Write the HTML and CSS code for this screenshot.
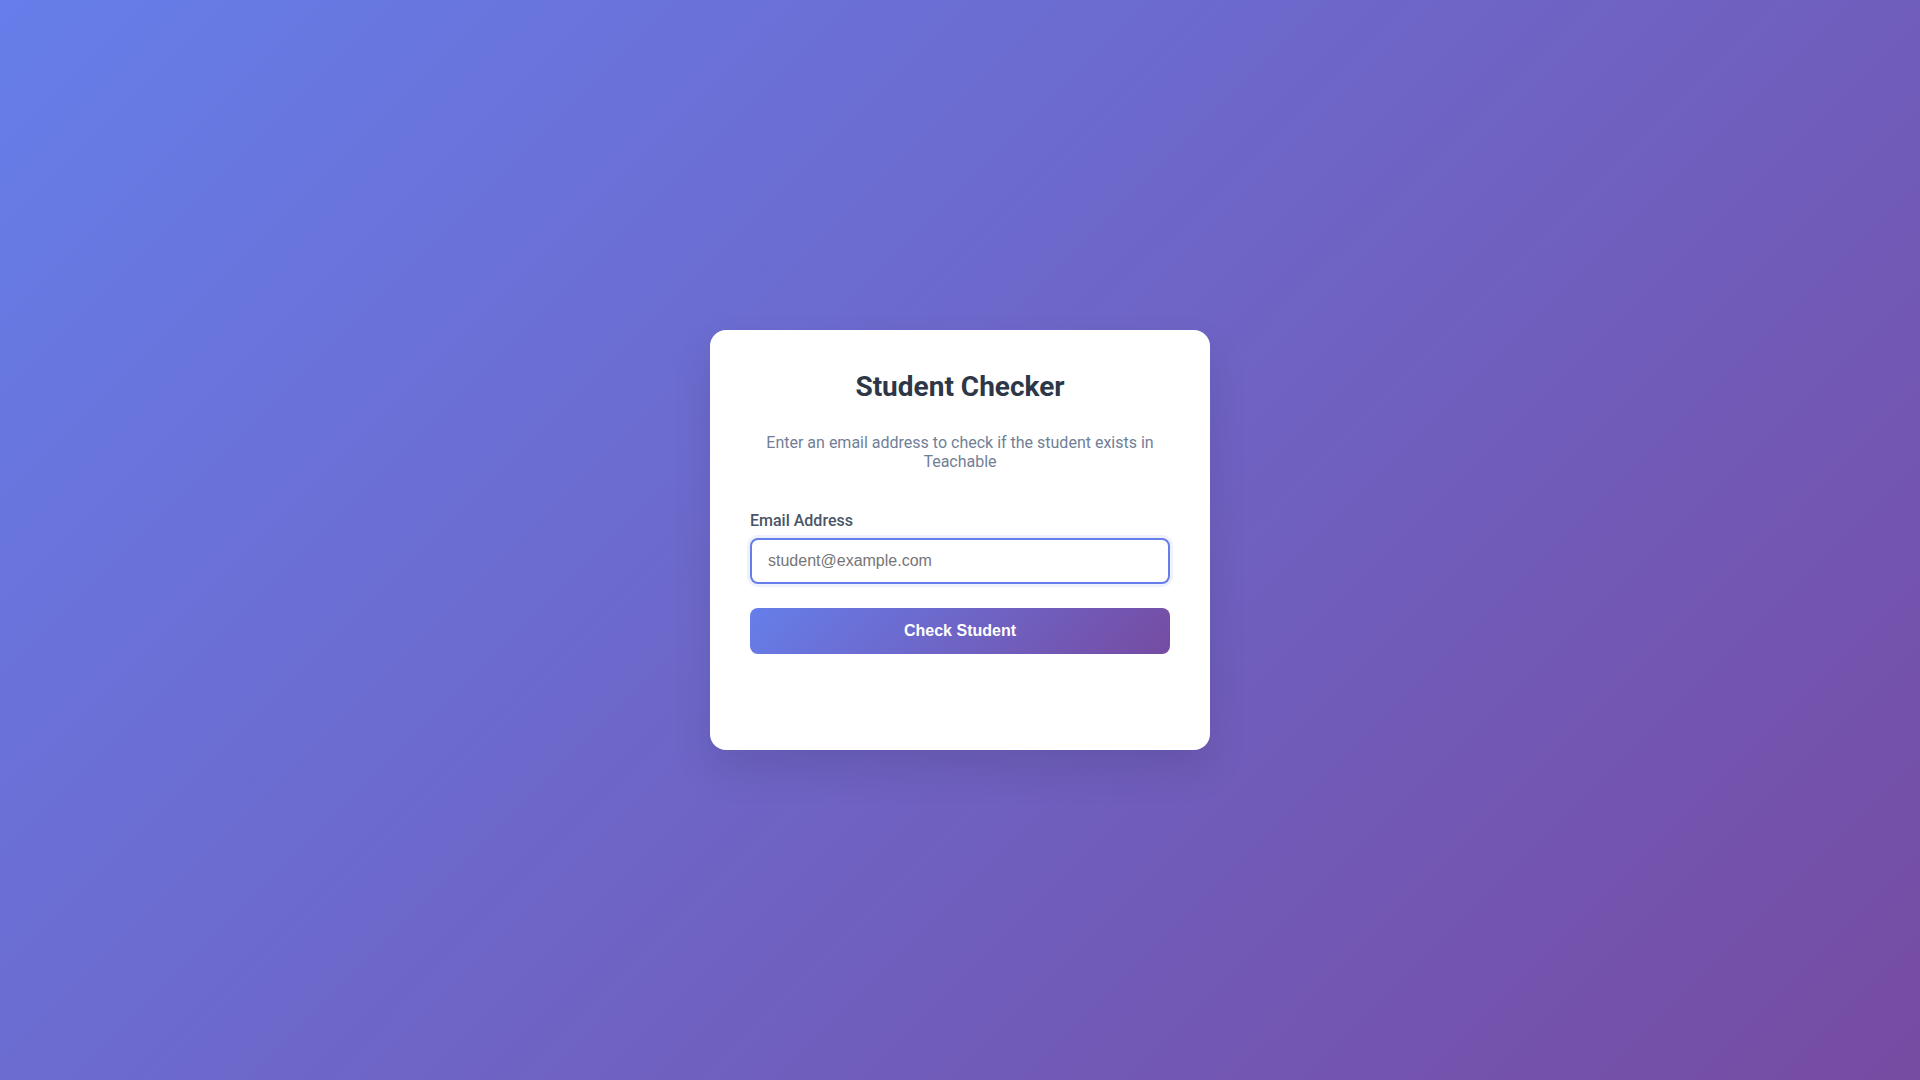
FILE: index.html
```html
<!DOCTYPE html>
<html lang="en">
<head>
<meta charset="utf-8">
<title>Student Checker</title>
<link rel="stylesheet" href="styles.css">
</head>
<body>
<main class="card">
  <h1 class="title">Student Checker</h1>
  <p class="subtitle">Enter an email address to check if the student exists in Teachable</p>
  <form class="form">
    <div class="form-group">
      <label class="label" for="email">Email Address</label>
      <input class="input" id="email" type="email" placeholder="student@example.com">
    </div>
    <button class="button" type="button">Check Student</button>
  </form>
  <div class="result"></div>
</main>
</body>
</html>
```
FILE: styles.css
```css
* { box-sizing: border-box; }
html, body { height: 100%; }
body {
  margin: 0;
  font-family: Roboto, "Liberation Sans", sans-serif;
  background: linear-gradient(135deg, #667eea 0%, #764ba2 100%);
  display: flex;
  align-items: center;
  justify-content: center;
  min-height: 100vh;
}
.card {
  width: 500px;
  background: #ffffff;
  border-radius: 16px;
  padding: 40px;
  box-shadow: 0 20px 40px rgba(0, 0, 0, 0.1);
}
.title {
  margin: 0 0 30px;
  text-align: center;
  font-size: 28px;
  font-weight: 700;
  color: #2d3748;
}
.subtitle {
  margin: 0 0 40px;
  text-align: center;
  font-size: 16px;
  color: #718096;
}
.form-group {
  display: flex;
  flex-direction: column;
  margin-bottom: 24px;
}
.label {
  font-size: 16px;
  font-weight: 500;
  color: #4a5568;
  margin-bottom: 8px;
}
.input {
  width: 100%;
  padding: 12px 16px;
  font-family: "Liberation Sans", Arial, sans-serif;
  font-size: 16px;
  border: 2px solid #667eea;
  border-radius: 8px;
  outline: none;
  box-shadow: 0 0 0 3px rgba(102, 126, 234, 0.1);
  color: #2d3748;
}
.input::placeholder { color: #757575; }
.button {
  width: 100%;
  padding: 14px;
  border: none;
  border-radius: 8px;
  background: linear-gradient(135deg, #667eea 0%, #764ba2 100%);
  color: #ffffff;
  font-family: "Liberation Sans", Arial, sans-serif;
  font-size: 16px;
  font-weight: 700;
  cursor: pointer;
}
.result { height: 56px; }
```
